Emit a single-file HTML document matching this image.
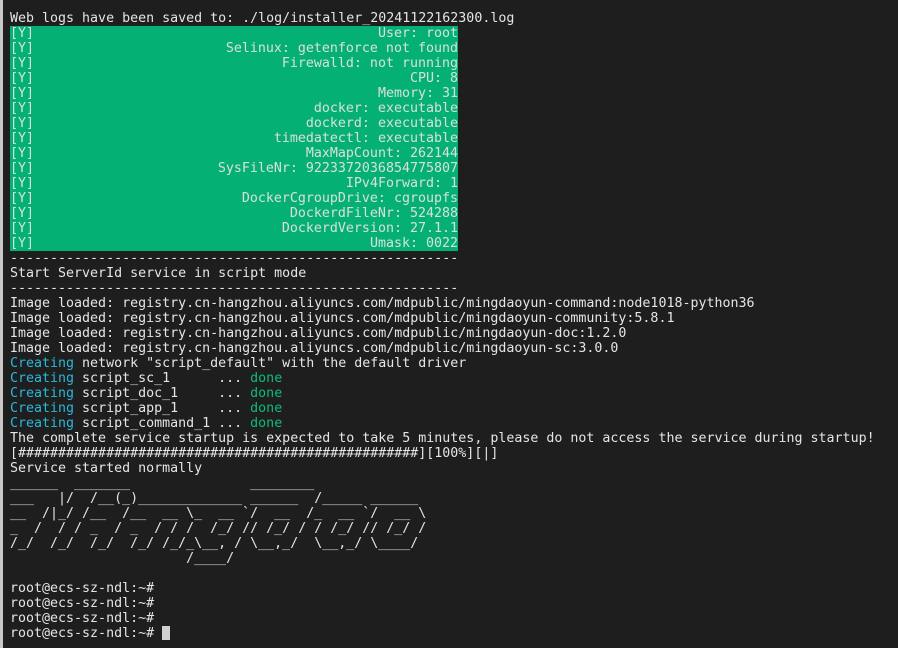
<!DOCTYPE html>
<html><head><meta charset="utf-8"><style>
html,body{margin:0;padding:0;background:#1e1e1e;width:898px;height:648px;overflow:hidden}
.bar{position:absolute;left:0;top:0;width:3px;height:648px;background:#c8c8c8}
pre{position:absolute;left:10px;top:11px;margin:0;font-family:"DejaVu Sans Mono","Liberation Mono",monospace;font-size:13.3px;line-height:15px;color:#e5e5e5;white-space:pre}
.g{display:block;width:448px;background:#05b075;color:#d8e0dc;position:relative}
.g span{position:absolute;right:0}
.c{color:#29b8db}.d{color:#0dbc79}
.cur{display:inline-block;width:8px;height:14px;background:#d0d0d0;vertical-align:-3px}
</style></head><body><div class="bar"></div><pre>Web logs have been saved to: ./log/installer_20241122162300.log
<span class="g">[Y]<span>User: root</span></span><span class="g">[Y]<span>Selinux: getenforce not found</span></span><span class="g">[Y]<span>Firewalld: not running</span></span><span class="g">[Y]<span>CPU: 8</span></span><span class="g">[Y]<span>Memory: 31</span></span><span class="g">[Y]<span>docker: executable</span></span><span class="g">[Y]<span>dockerd: executable</span></span><span class="g">[Y]<span>timedatectl: executable</span></span><span class="g">[Y]<span>MaxMapCount: 262144</span></span><span class="g">[Y]<span>SysFileNr: 9223372036854775807</span></span><span class="g">[Y]<span>IPv4Forward: 1</span></span><span class="g">[Y]<span>DockerCgroupDrive: cgroupfs</span></span><span class="g">[Y]<span>DockerdFileNr: 524288</span></span><span class="g">[Y]<span>DockerdVersion: 27.1.1</span></span><span class="g">[Y]<span>Umask: 0022</span></span>--------------------------------------------------------
Start ServerId service in script mode
--------------------------------------------------------
Image loaded: registry.cn-hangzhou.aliyuncs.com/mdpublic/mingdaoyun-command:node1018-python36
Image loaded: registry.cn-hangzhou.aliyuncs.com/mdpublic/mingdaoyun-community:5.8.1
Image loaded: registry.cn-hangzhou.aliyuncs.com/mdpublic/mingdaoyun-doc:1.2.0
Image loaded: registry.cn-hangzhou.aliyuncs.com/mdpublic/mingdaoyun-sc:3.0.0
<span class="c">Creating</span> network "script_default" with the default driver
<span class="c">Creating</span> script_sc_1      ... <span class="d">done</span>
<span class="c">Creating</span> script_doc_1     ... <span class="d">done</span>
<span class="c">Creating</span> script_app_1     ... <span class="d">done</span>
<span class="c">Creating</span> script_command_1 ... <span class="d">done</span>
The complete service startup is expected to take 5 minutes, please do not access the service during startup!
[##################################################][100%][|]
Service started normally
______  _______               ________
___   |/  /__(_)_____________ ______  /_____ ______
__  /|_/ /__  /__  __ \_  __ `/  __  /_  __ `/  __ \
_  /  / / _  / _  / / /  /_/ // /_/ / / /_/ // /_/ /
/_/  /_/  /_/  /_/ /_/_\__, / \__,_/  \__,_/ \____/
                      /____/

root@ecs-sz-ndl:~#
root@ecs-sz-ndl:~#
root@ecs-sz-ndl:~#
root@ecs-sz-ndl:~# <span class="cur"></span></pre></body></html>
